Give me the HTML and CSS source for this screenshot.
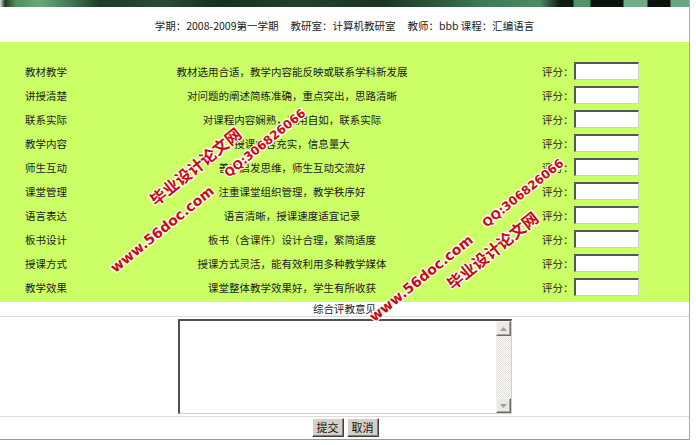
FILE: index.html
```html
<!DOCTYPE html>
<html lang="zh-CN">
<head>
<meta charset="utf-8">
<title>教学评价</title>
<link rel="stylesheet" href="styles.css">
</head>
<body>
<div class="page">
  <div class="banner"></div>
  <div class="info">
    <span class="seg">学期：2008-2009第一学期</span>
    <span class="seg">教研室：计算机教研室</span>
    <span class="seg">教师：bbb 课程：汇编语言</span>
  </div>
  <div class="eval">
    <div class="row"><div class="name">教材教学</div><div class="desc">教材选用合适，教学内容能反映或联系学科新发展</div><div class="rate"><span>评分：</span><input class="score" type="text"></div></div>
    <div class="row"><div class="name">讲授清楚</div><div class="desc">对问题的阐述简练准确，重点突出，思路清晰</div><div class="rate"><span>评分：</span><input class="score" type="text"></div></div>
    <div class="row"><div class="name">联系实际</div><div class="desc">对课程内容娴熟，运用自如，联系实际</div><div class="rate"><span>评分：</span><input class="score" type="text"></div></div>
    <div class="row"><div class="name">教学内容</div><div class="desc">授课内容充实，信息量大</div><div class="rate"><span>评分：</span><input class="score" type="text"></div></div>
    <div class="row"><div class="name">师生互动</div><div class="desc">善于启发思维，师生互动交流好</div><div class="rate"><span>评分：</span><input class="score" type="text"></div></div>
    <div class="row"><div class="name">课堂管理</div><div class="desc">注重课堂组织管理，教学秩序好</div><div class="rate"><span>评分：</span><input class="score" type="text"></div></div>
    <div class="row"><div class="name">语言表达</div><div class="desc">语言清晰，授课速度适宜记录</div><div class="rate"><span>评分：</span><input class="score" type="text"></div></div>
    <div class="row"><div class="name">板书设计</div><div class="desc">板书（含课件）设计合理，繁简适度</div><div class="rate"><span>评分：</span><input class="score" type="text"></div></div>
    <div class="row"><div class="name">授课方式</div><div class="desc">授课方式灵活，能有效利用多种教学媒体</div><div class="rate"><span>评分：</span><input class="score" type="text"></div></div>
    <div class="row"><div class="name">教学效果</div><div class="desc">课堂整体教学效果好，学生有所收获</div><div class="rate"><span>评分：</span><input class="score" type="text"></div></div>
  </div>
  <div class="sec-title">综合评教意见</div>
  <div class="sec-text">
    <div class="ta">
      <textarea class="opinion"></textarea>
      <div class="sbar">
        <div class="sbtn"><svg width="7" height="4" viewBox="0 0 7 4"><path d="M0 4 L3.5 0 L7 4 Z" fill="#a0a0a0"/></svg></div>
        <div class="strack"></div>
        <div class="sbtn"><svg width="7" height="4" viewBox="0 0 7 4"><path d="M0 0 L3.5 4 L7 0 Z" fill="#a0a0a0"/></svg></div>
      </div>
    </div>
  </div>
  <div class="sec-btns">
    <button class="btn" type="button">提交</button>
    <button class="btn" type="button">取消</button>
  </div>

  <div class="wm wm-cn wm1a">毕业设计论文网</div>
  <div class="wm wm-qq wm1b">QQ:306826066</div>
  <div class="wm wm-www wm1c">www.56doc.com</div>
  <div class="wm wm-qq wm2a">QQ:306826066</div>
  <div class="wm wm-cn wm2b">毕业设计论文网</div>
  <div class="wm wm-www wm2c">www.56doc.com</div>
</div>
</body>
</html>
```

FILE: styles.css
```css
html, body {
  margin: 0;
  padding: 0;
  background: #fff;
}
body {
  font-family: "Noto Sans CJK SC", "Liberation Sans", sans-serif;
  font-size: 10.5px;
  color: #1a1a1a;
}
.page {
  position: relative;
  width: 689px;
  border-right: 1px solid #a8a8a8;
  overflow: hidden;
}
.banner {
  height: 7px;
  background: linear-gradient(90deg,
    #d8e0d8 0px, #203a28 5px, #4f9060 16px, #6aa878 40px, #3f7a52 70px,
    #1c3a26 100px, #2a4c34 160px, #16301e 220px, #24402c 300px,
    #1a3322 380px, #2c5a3a 440px, #3d7a52 480px, #4a8c60 540px,
    #0e1a12 560px, #0e1a12 573px, #4f9467 574px, #4f9467 590px,
    #0a140c 591px, #0a140c 623px, #6fae84 624px, #6fae84 647px,
    #0a140c 648px, #0a140c 670px, #6aa880 671px, #6aa880 689px);
}
.info {
  height: 35px;
  display: flex;
  justify-content: center;
  align-items: center;
  gap: 12px;
  padding-top: 1px;
  box-sizing: border-box;
  color: #222;
}
.eval {
  background: #ccff66;
  padding: 17px 0 3px;
}
.row {
  display: grid;
  grid-template-columns: 170px 244px 1fr;
  height: 24px;
  align-items: center;
}
.name {
  padding-left: 25px;
}
.desc {
  text-align: center;
}
.rate {
  display: flex;
  align-items: center;
  padding-left: 128px;
}
.score {
  width: 65px;
  height: 18px;
  box-sizing: border-box;
  margin: 0;
  padding: 0 2px;
  background: #fff;
  border-top: 2px solid #555;
  border-left: 2px solid #555;
  border-right: 1px solid #d4d0c8;
  border-bottom: 1px solid #d4d0c8;
  font-size: 11px;
}
.sec-title {
  height: 14px;
  line-height: 14px;
  text-align: center;
  border-bottom: 1px solid #dcdcdc;
  color: #222;
}
.sec-text {
  height: 99px;
  display: flex;
  justify-content: center;
  align-items: flex-start;
  padding-top: 2px;
  box-sizing: border-box;
  border-bottom: 1px solid #dcdcdc;
  height: 100px;
}
.ta {
  width: 334px;
  height: 95px;
  box-sizing: border-box;
  display: flex;
  background: #fff;
  border-top: 2px solid #505050;
  border-left: 2px solid #505050;
  border-right: 1px solid #d4d0c8;
  border-bottom: 1px solid #d4d0c8;
}
.opinion {
  flex: 1;
  border: none;
  outline: none;
  resize: none;
  margin: 0;
  padding: 2px;
  font-size: 11px;
  background: #fff;
}
.sbar {
  width: 15px;
  display: flex;
  flex-direction: column;
}
.sbtn {
  height: 15px;
  box-sizing: border-box;
  background: #ece9e4;
  border-top: 1px solid #f4f4f4;
  border-left: 1px solid #f4f4f4;
  border-right: 1px solid #6a6a6a;
  border-bottom: 1px solid #6a6a6a;
  box-shadow: inset -1px -1px 0 #a8a8a8;
  display: flex;
  justify-content: center;
  align-items: center;
}
.strack {
  flex: 1;
  background: repeating-conic-gradient(#ffffff 0 25%, #dedbd5 0 50%) 0 0 / 2px 2px;
}
.sec-btns {
  height: 23px;
  box-sizing: border-box;
  display: flex;
  justify-content: center;
  align-items: flex-start;
  gap: 3px;
  padding-top: 1px;
  padding-left: 1px;
  border-bottom: 1px solid #9a9a9a;
}
.btn {
  height: 19px;
  padding: 0 4px;
  margin: 0;
  font-family: "Noto Sans CJK SC", sans-serif;
  font-size: 11px;
  line-height: 15px;
  color: #111;
  background: #d4d0c8;
  border-top: 1px solid #fff;
  border-left: 1px solid #fff;
  border-right: 1px solid #404040;
  border-bottom: 1px solid #404040;
  box-shadow: inset -1px -1px 0 #808080;
}
.wm {
  position: absolute;
  white-space: nowrap;
  color: #cc0a0a;
  font-weight: 700;
  transform: translate(-50%, -50%) rotate(-39deg);
  text-shadow: 1px 0 0 #fff, -1px 0 0 #fff, 0 1px 0 #fff, 0 -1px 0 #fff,
    1px 1px 0 #fff, -1px -1px 0 #fff, 1px -1px 0 #fff, -1px 1px 0 #fff;
  line-height: 1;
}
.wm-cn {
  font-family: "Noto Sans CJK SC", sans-serif;
  font-size: 16px;
}
.wm-qq {
  font-family: "DejaVu Sans", sans-serif;
  font-size: 12px;
}
.wm-www {
  font-family: "DejaVu Sans", sans-serif;
  font-size: 14px;
}
.wm1a { left: 195px; top: 166px; }
.wm1b { left: 265px; top: 143px; }
.wm1c { left: 162px; top: 229px; }
.wm2a { left: 523px; top: 193px; }
.wm2b { left: 492px; top: 250px; }
.wm2c { left: 421px; top: 278px; }
```
